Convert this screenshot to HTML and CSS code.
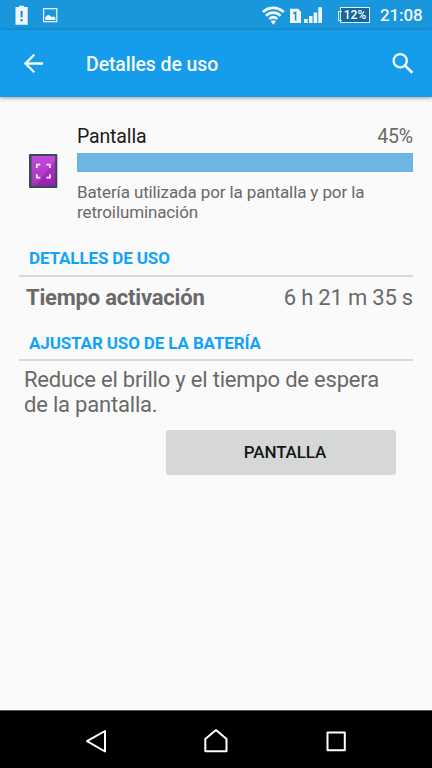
FILE: index.html
```html
<!DOCTYPE html>
<html lang="es">
<head>
<meta charset="utf-8">
<title>Detalles de uso</title>
<link rel="stylesheet" href="styles.css">
</head>
<body>
<div class="status">
  <svg class="status-left" width="64" height="30" viewBox="0 0 64 30">
    <path fill="#eef7fd" d="M15.500 7H19V5.800h5V7h3.700v17.700H15.500z"/>
    <path fill="#247fb5" d="M20.500 11h2.200l-.3 6.500h-1.600zM20.500 19.200h2.200v2h-2.200z"/>
    <path fill="none" stroke="#e8f5fd" stroke-width="1.200" d="M43.600 8.600h13.200v13H43.600z"/>
    <path fill="#f2faff" d="M45.300 20v-3l3-2.300 1.800 1 1.800 1.600 1.700-1 1.800 1.500V20z"/>
  </svg>
  <svg class="status-signal" width="62" height="30" viewBox="262 0 62 30">
    <g fill="none" stroke="#eef8ff" stroke-width="2.700">
      <path d="M262.800 12c6.200-5.600 14.800-5.600 21 0M266 15.700c4.300-4 10.300-4 14.600 0M269.300 19c2.500-2.200 5.500-2.200 8 0"/>
    </g>
    <path fill="#eef8ff" d="M270.700 21.300c1.600-1.300 3.600-1.300 5.200 0l-2.600 3.400z"/>
    <path fill="#eef8ff" d="M290 8.700h8l3 3v11.200h-11z"/>
    <path fill="none" stroke="#1c8fcf" stroke-width="1.600" d="M293.200 13.400l2.400-1v8.200"/>
    <path fill="#eef8ff" d="M304 19h3.700v4H304zM309 16h3.500v7H309zM313.600 12.500h3.600V23h-3.600zM318.300 7.300h3.700V23h-3.700z"/>
  </svg>
  <div class="battery"><span>12%</span></div>
  <div class="clock">21:08</div>
</div>
<header class="appbar">
  <svg class="back" width="20" height="20" viewBox="24 54 20 20" fill="none" stroke="#f4fbff" stroke-width="2.300"><path d="M43 63.500H25.500M34.300 54.700l-8.800 8.800 8.800 8.800"/></svg>
  <h1>Detalles de uso</h1>
  <svg class="search" width="24" height="24" viewBox="391 52 24 24" fill="none" stroke="#f8fcff"><circle cx="400.200" cy="60.700" r="6.600" stroke-width="2.300"/><path stroke-width="2.700" d="M404.800 65.400l7.500 7.300"/></svg>
</header>
<main>
  <section class="usage">
    <svg class="app-icon" width="29" height="35" viewBox="0 0 29 35">
      <defs><linearGradient id="purple" x1="0" y1="0" x2="0" y2="1"><stop offset="0" stop-color="#bd37d4"/><stop offset="1" stop-color="#9520ad"/></linearGradient></defs>
      <rect width="28.300" height="34" rx="1" fill="#354b5b"/>
      <path fill="url(#purple)" d="M2.500 2h23.700v29.800H2.500z"/>
      <path fill="#fff" opacity=".1" d="M2.500 2h23.700v4L7 31.800H2.500z"/>
      <path fill="none" stroke="#fbeaff" stroke-width="1.800" d="M7.800 14v-3.400h3.500M17.400 10.600h3.500V14M7.800 20.300v3.400h3.500M17.400 23.700h3.500v-3.400"/>
    </svg>
    <div class="usage-body">
      <div class="usage-title"><span class="name">Pantalla</span><span>45%</span></div>
      <div class="bar"></div>
      <p>Batería utilizada por la pantalla y por la<br>retroiluminación</p>
    </div>
  </section>
  <h2>DETALLES DE USO</h2>
  <div class="detail"><b>Tiempo activación</b><span>6 h 21 m 35 s</span></div>
  <h2>AJUSTAR USO DE LA BATERÍA</h2>
  <p class="advice">Reduce el brillo y el tiempo de espera<br>de la pantalla.</p>
  <button type="button">PANTALLA</button>
</main>
<nav>
  <svg width="432" height="57" viewBox="0 711 432 57" fill="none" stroke="#fff" stroke-width="2" stroke-linejoin="round">
    <path d="M105 731v20.500L87 741.200zM205.300 739l10.700-9 10.500 9v12.300h-21.200zM327.500 732.600h17.300v17.600h-17.300z"/>
  </svg>
</nav>
</body>
</html>
```
FILE: styles.css
```css
* { box-sizing: border-box; }
body {
  margin: 0;
  width: 432px;
  height: 768px;
  overflow: hidden;
  display: flex;
  flex-direction: column;
  background: #fafafa;
  color: #696969;
  font-family: Roboto, sans-serif;
}
h1, h2, p { margin: 0; }
svg { display: block; flex: none; }
.status {
  height: 30px;
  display: flex;
  align-items: center;
  background: #1a96dc;
}
.status-signal { margin-left: 198px; }
.battery {
  width: 30px;
  height: 16px;
  margin-left: 16px;
  border: 1px solid #d9effa;
  background: #18659a;
  position: relative;
  color: #fff;
  font-size: 12px;
  font-weight: 500;
  line-height: 15px;
  text-align: center;
}
.battery::before {
  content: "";
  position: absolute;
  left: -3px;
  top: 3px;
  width: 3px;
  height: 8px;
  border: 1px solid #d9effa;
  border-right: 0;
}
.clock {
  margin-left: 10px;
  color: #f0f9ff;
  font-size: 17px;
  font-weight: 500;
  letter-spacing: -.1px;
  line-height: 32px;
}
.appbar {
  height: 67px;
  flex: none;
  display: flex;
  align-items: center;
  padding: 0 17px 0 24px;
  background: #159ceb;
  box-shadow: 0 1px 4px rgba(0, 0, 0, .4);
}
.appbar h1 {
  margin-left: 42px;
  padding-top: 2px;
  color: #f5fbff;
  font-size: 19.5px;
  font-weight: 500;
  letter-spacing: -.1px;
  line-height: 24px;
}
.search { margin-left: auto; }
main {
  flex: 1;
  padding: 28px 19px 0;
}
.usage { display: flex; }
.app-icon { margin: 29px 19px 0 10px; }
.usage-body { flex: 1; }
.usage-title {
  display: flex;
  justify-content: space-between;
  font-size: 19.5px;
  letter-spacing: -.15px;
  line-height: 24px;
}
.name { color: #1b1b1b; }
.bar {
  height: 19px;
  margin: 4px 0 10px;
  background: #6eb6e2;
}
.usage p {
  font-size: 17px;
  letter-spacing: -.12px;
  line-height: 20px;
}
h2 {
  height: 29px;
  margin-top: 26px;
  padding-left: 10px;
  border-bottom: 2px solid #d8d8d8;
  color: #10a3fa;
  font-size: 17px;
  font-weight: 700;
  letter-spacing: -.13px;
  line-height: 20px;
}
.detail {
  display: flex;
  justify-content: space-between;
  padding: 8px 0 0 7px;
  font-size: 22px;
  letter-spacing: -.2px;
  line-height: 26px;
}
.detail + h2 {
  height: 28px;
  margin-top: 22px;
}
.advice {
  padding: 6px 0 0 5px;
  font-size: 22px;
  letter-spacing: -.2px;
  line-height: 25px;
}
button {
  display: block;
  width: 230px;
  height: 44px;
  margin: 13px 0 0 147px;
  padding: 0 0 0 8px;
  border: 0;
  border-radius: 3px;
  background: #d6d8d7;
  box-shadow: 0 1px 1px rgba(0, 0, 0, .14);
  color: #151515;
  font: 500 17px Roboto, sans-serif;
  letter-spacing: -.13px;
}
nav {
  height: 58px;
  flex: none;
  border-top: 1px solid #555;
  background: #000;
}
```
